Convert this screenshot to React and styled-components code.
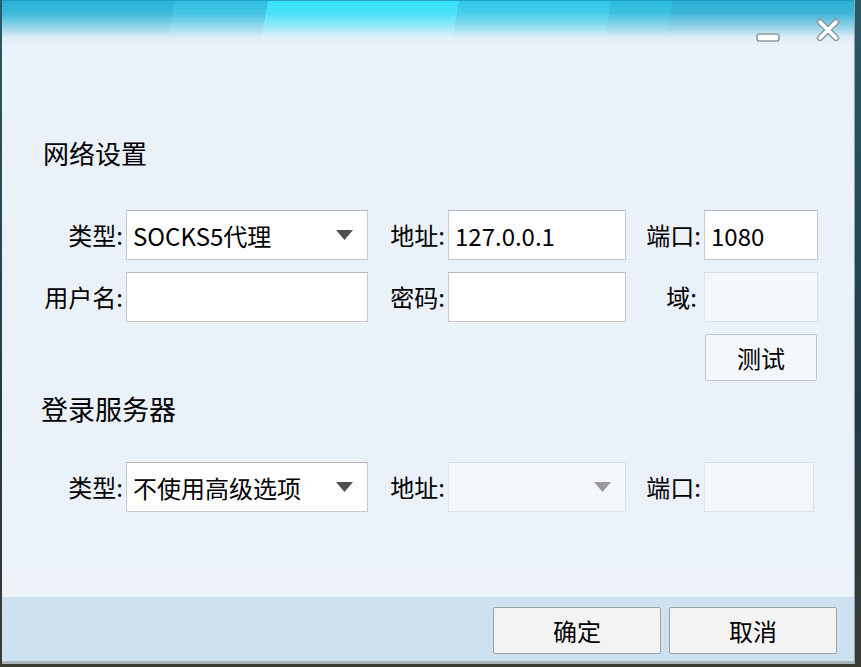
import styled, { createGlobalStyle } from 'styled-components';

const Global = createGlobalStyle`
  html, body { margin:0; padding:0; }
  body {
    width:861px; height:667px; overflow:hidden;
    background: linear-gradient(180deg, #2b5a66 0%, #1f3c48 60%, #3a3a30 100%);
    font-family: "Noto Sans CJK SC", "Noto Sans", sans-serif;
  }
`;

const Desktop = styled.div`
  display:flex; padding:0 6px 3px 2px; height:667px; box-sizing:border-box;
`;

const Window = styled.div`
  width:853px; height:664px; box-sizing:border-box;
  display:flex; flex-flow:column;
  border-right:1px solid #8fa3ad; border-bottom:3px solid #a9b4bb;
  background: linear-gradient(180deg, #ebf1f9 0%, #ebf1f9 70%, #eff4fa 100%);
  color:#000;
`;

const TitleBar = styled.div`
  height:50px; flex:none;
  display:flex; justify-content:flex-end; align-items:flex-start;
  padding-right:14px; gap:36px;
  border-top:1px solid #1f9fc2; box-sizing:border-box;
  background:
    linear-gradient(180deg, rgba(235,241,249,0) 0px, rgba(235,241,249,0.1) 12px, rgba(235,241,249,0.55) 26px, rgba(235,241,249,0.92) 36px, #ebf1f9 44px),
    linear-gradient(100deg, #29b3d6 0 170px, #30bfdf 170px 262px, #38e0fa 262px 450px, #31c9e7 450px 600px, #2bbbdc 600px 660px, #2aafd2 660px);
`;

const WinButton = styled.button`
  border:none; background:none; padding:0; margin-top:${p => p.$top}px;
  display:flex;
`;

const Content = styled.div`
  flex:1; display:flex; flex-flow:column;
  padding:86px 0 0 0;
`;

const SectionTitle = styled.div`
  font-size:${p => p.$size || 26}px; line-height:34px; margin-left:${p => p.$left}px;
  margin-bottom:${p => p.$bottom}px;
`;

const FormGrid = styled.div`
  display:grid;
  grid-template-columns:124px 242px 80px 178px 78px 114px;
  row-gap:12px;
`;

const Label = styled.label`
  font-size:24px; display:flex; align-items:center; justify-content:flex-end;
  padding-right:${p => p.$pr || 3}px; height:48px; white-space:nowrap;
`;

const Field = styled.div`
  height:50px; box-sizing:border-box;
  width:${p => p.$w ? p.$w + 'px' : 'auto'};
  border:1px solid ${p => p.$disabled ? '#dce2ea' : '#c6c9cc'};
  border-top-color:${p => p.$disabled ? '#d8dee6' : '#b4b7ba'};
  background:${p => p.$disabled ? '#f3f6fb' : '#fff'};
  display:flex; align-items:center; justify-content:space-between;
  padding:0 14px 0 6px;
  font-size:24px;
`;

const Arrow = styled.svg`
  flex:none;
`;

const ActionRow = styled.div`
  display:flex; justify-content:flex-end; padding-right:37px;
  margin:12px 0 11px;
`;

const PlainButton = styled.button`
  width:${p => p.$w}px; height:47px; box-sizing:border-box;
  font-family:inherit; font-size:24px; color:#000;
  border:1px solid ${p => p.$dark ? '#9ba2a8' : '#c2c7cc'};
  border-radius:2px;
  background:${p => p.$dark ? '#f3f3f3' : '#f4f7fb'};
  padding:0;
`;

const Footer = styled.div`
  height:64px; flex:none; background:#cde1f1;
  display:flex; justify-content:flex-end; align-items:flex-start;
  padding:10px 17px 0 0; box-sizing:border-box; gap:8px;
`;

function Select({ value, w, disabled }) {
  return (
    <Field $w={w} $disabled={disabled}>
      <span>{value}</span>
      <Arrow width="17" height="10" viewBox="0 0 17 10">
        <polygon points="0,0 17,0 8.5,10" fill={disabled ? '#9a9a9a' : '#505050'} />
      </Arrow>
    </Field>
  );
}

function App() {
  return (
    <>
      <Global />
      <Desktop>
        <Window>
          <TitleBar>
            <WinButton $top={32} aria-label="minimize">
              <svg width="24" height="9" viewBox="0 0 24 9">
                <rect x="1" y="1" width="22" height="7" rx="2" fill="#fff" stroke="#8c9aa2" strokeWidth="1.6" />
              </svg>
            </WinButton>
            <WinButton $top={17} aria-label="close">
              <svg width="24" height="24" viewBox="0 0 24 24">
                <path d="M4 4 L20 20 M20 4 L4 20" stroke="#8c9aa2" strokeWidth="6.5" strokeLinecap="round" />
                <path d="M4 4 L20 20 M20 4 L4 20" stroke="#fff" strokeWidth="3.5" strokeLinecap="round" />
              </svg>
            </WinButton>
          </TitleBar>
          <Content>
            <SectionTitle $left={41} $bottom={40}>网络设置</SectionTitle>
            <FormGrid>
              <Label>类型:</Label>
              <Select value="SOCKS5代理" />
              <Label>地址:</Label>
              <Field>127.0.0.1</Field>
              <Label>端口:</Label>
              <Field>1080</Field>

              <Label>用户名:</Label>
              <Field />
              <Label>密码:</Label>
              <Field />
              <Label $pr={7}>域:</Label>
              <Field $disabled />
            </FormGrid>
            <ActionRow>
              <PlainButton $w={112}>测试</PlainButton>
            </ActionRow>
            <SectionTitle $left={39} $bottom={36} $size={27}>登录服务器</SectionTitle>
            <FormGrid>
              <Label>类型:</Label>
              <Select value="不使用高级选项" />
              <Label>地址:</Label>
              <Select value="" disabled />
              <Label>端口:</Label>
              <Field $disabled $w={110} />
            </FormGrid>
          </Content>
          <Footer>
            <PlainButton $dark $w={168}>确定</PlainButton>
            <PlainButton $dark $w={168}>取消</PlainButton>
          </Footer>
        </Window>
      </Desktop>
    </>
  );
}

export default App;
